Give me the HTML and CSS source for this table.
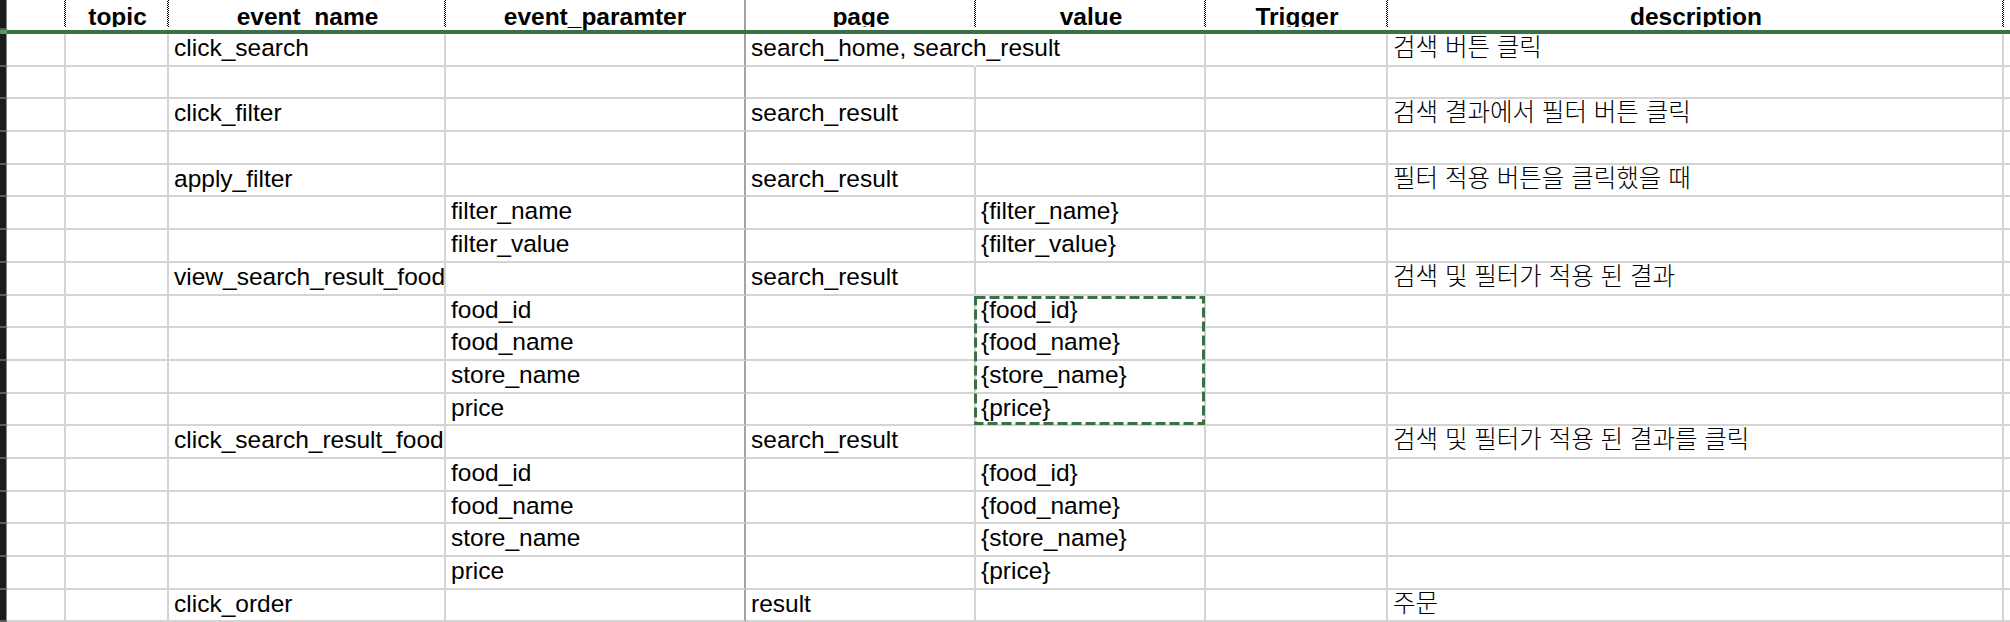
FILE: index.html
```html
<!DOCTYPE html>
<html lang="ko">
<head>
<meta charset="utf-8">
<title>event sheet</title>
<link rel="stylesheet" href="styles.css">
</head>
<body>
<div class="sheet">
  <!-- header -->
  <div class="g"></div>
  <div class="h"></div>
  <div class="h">topic</div>
  <div class="h">event_name</div>
  <div class="h k">event_paramter</div>
  <div class="h">page</div>
  <div class="h">value</div>
  <div class="h">Trigger</div>
  <div class="h">description</div>
  <div class="h last"></div>

  <div class="fg"></div>
  <div class="fz"></div>

  <!-- 1 -->
  <div class="g"></div><div class="d"></div><div class="d"></div>
  <div class="d">click_search</div><div class="d k"></div>
  <div class="d spill">search_home, search_result</div><div class="d"></div><div class="d"></div>
  <div class="d ko">검색 버튼 클릭</div><div class="d last"></div>
  <!-- 2 -->
  <div class="g"></div><div class="d"></div><div class="d"></div>
  <div class="d"></div><div class="d k"></div>
  <div class="d"></div><div class="d"></div><div class="d"></div>
  <div class="d ko"></div><div class="d last"></div>
  <!-- 3 -->
  <div class="g"></div><div class="d"></div><div class="d"></div>
  <div class="d">click_filter</div><div class="d k"></div>
  <div class="d">search_result</div><div class="d"></div><div class="d"></div>
  <div class="d ko">검색 결과에서 필터 버튼 클릭</div><div class="d last"></div>
  <!-- 4 -->
  <div class="g"></div><div class="d"></div><div class="d"></div>
  <div class="d"></div><div class="d k"></div>
  <div class="d"></div><div class="d"></div><div class="d"></div>
  <div class="d ko"></div><div class="d last"></div>
  <!-- 5 -->
  <div class="g"></div><div class="d"></div><div class="d"></div>
  <div class="d">apply_filter</div><div class="d k"></div>
  <div class="d">search_result</div><div class="d"></div><div class="d"></div>
  <div class="d ko">필터 적용 버튼을 클릭했을 때</div><div class="d last"></div>
  <!-- 6 -->
  <div class="g"></div><div class="d"></div><div class="d"></div>
  <div class="d"></div><div class="d k">filter_name</div>
  <div class="d"></div><div class="d">{filter_name}</div><div class="d"></div>
  <div class="d ko"></div><div class="d last"></div>
  <!-- 7 -->
  <div class="g"></div><div class="d"></div><div class="d"></div>
  <div class="d"></div><div class="d k">filter_value</div>
  <div class="d"></div><div class="d">{filter_value}</div><div class="d"></div>
  <div class="d ko"></div><div class="d last"></div>
  <!-- 8 -->
  <div class="g"></div><div class="d"></div><div class="d"></div>
  <div class="d">view_search_result_food</div><div class="d k"></div>
  <div class="d">search_result</div><div class="d"></div><div class="d"></div>
  <div class="d ko">검색 및 필터가 적용 된 결과</div><div class="d last"></div>
  <!-- 9 -->
  <div class="g"></div><div class="d"></div><div class="d"></div>
  <div class="d"></div><div class="d k">food_id</div>
  <div class="d"></div><div class="d">{food_id}</div><div class="d"></div>
  <div class="d ko"></div><div class="d last"></div>
  <!-- 10 -->
  <div class="g"></div><div class="d"></div><div class="d"></div>
  <div class="d"></div><div class="d k">food_name</div>
  <div class="d"></div><div class="d">{food_name}</div><div class="d"></div>
  <div class="d ko"></div><div class="d last"></div>
  <!-- 11 -->
  <div class="g"></div><div class="d"></div><div class="d"></div>
  <div class="d"></div><div class="d k">store_name</div>
  <div class="d"></div><div class="d">{store_name}</div><div class="d"></div>
  <div class="d ko"></div><div class="d last"></div>
  <!-- 12 -->
  <div class="g"></div><div class="d"></div><div class="d"></div>
  <div class="d"></div><div class="d k">price</div>
  <div class="d"></div><div class="d">{price}</div><div class="d"></div>
  <div class="d ko"></div><div class="d last"></div>
  <!-- 13 -->
  <div class="g"></div><div class="d"></div><div class="d"></div>
  <div class="d">click_search_result_food</div><div class="d k"></div>
  <div class="d">search_result</div><div class="d"></div><div class="d"></div>
  <div class="d ko">검색 및 필터가 적용 된 결과를 클릭</div><div class="d last"></div>
  <!-- 14 -->
  <div class="g"></div><div class="d"></div><div class="d"></div>
  <div class="d"></div><div class="d k">food_id</div>
  <div class="d"></div><div class="d">{food_id}</div><div class="d"></div>
  <div class="d ko"></div><div class="d last"></div>
  <!-- 15 -->
  <div class="g"></div><div class="d"></div><div class="d"></div>
  <div class="d"></div><div class="d k">food_name</div>
  <div class="d"></div><div class="d">{food_name}</div><div class="d"></div>
  <div class="d ko"></div><div class="d last"></div>
  <!-- 16 -->
  <div class="g"></div><div class="d"></div><div class="d"></div>
  <div class="d"></div><div class="d k">store_name</div>
  <div class="d"></div><div class="d">{store_name}</div><div class="d"></div>
  <div class="d ko"></div><div class="d last"></div>
  <!-- 17 -->
  <div class="g"></div><div class="d"></div><div class="d"></div>
  <div class="d"></div><div class="d k">price</div>
  <div class="d"></div><div class="d">{price}</div><div class="d"></div>
  <div class="d ko"></div><div class="d last"></div>
  <!-- 18 -->
  <div class="g"></div><div class="d"></div><div class="d"></div>
  <div class="d">click_order</div><div class="d k"></div>
  <div class="d">result</div><div class="d"></div><div class="d"></div>
  <div class="d ko">주문</div><div class="d last"></div>

  <svg class="sel" width="231" height="129" viewBox="0 0 231 129" aria-hidden="true">
    <rect x="1.5" y="1.5" width="228" height="126" fill="none" stroke="#3b7046" stroke-width="3" stroke-dasharray="10 4"/>
  </svg>
</div>
</body>
</html>
```

FILE: styles.css
```css
* { box-sizing: border-box; }

html, body {
  margin: 0;
  background: #ffffff;
}

body {
  font-family: "Liberation Sans", Arial, "Noto Sans CJK KR", sans-serif;
  color: #000000;
}

.sheet {
  position: relative;
  display: grid;
  grid-template-columns: 7px 59px 103px 277px 300px 230px 230px 182px 616px 1fr;
  grid-template-rows: 30px 4px repeat(18, 32.7px);
  width: 2010px;
  height: 622px;
  overflow: hidden;
}

/* row-number gutter */
.g {
  background: #1b1b1b;
  border-right: 1px solid #8c8c8c;
  border-bottom: 2px solid #5c5c5c;
}

/* header cells */
.h {
  height: 27px;
  overflow: hidden;
  padding-top: 3px;
  font-size: 24.5px;
  line-height: 27px;
  font-weight: 700;
  text-align: center;
  white-space: nowrap;
  background: repeating-conic-gradient(#000 0 25%, #fff 0 50%) right top / 2px 2px repeat-y;
}
.h.k {
  background: none;
  border-right: 2px solid #a3a3a3;
  height: 30px;
}
.h.last { background: none; }

/* frozen pane line */
.fg { background: #4f9d5e; }
.fz { grid-column: 2 / -1; background: #3b6f47; }

/* data cells */
.d {
  padding-left: 5px;
  font-size: 24.5px;
  line-height: 27px;
  white-space: nowrap;
  border-right: 2px solid #d4d4d4;
  border-bottom: 2px solid #d4d4d4;
}
.d.k { border-right-color: #a3a3a3; }
.d.last { border-right: none; }
.d.spill { border-right-color: transparent; }
.d.ko {
  font-family: "Liberation Sans", "Noto Sans CJK KR", sans-serif;
  font-weight: 300;
}

/* copy selection marquee */
.sel {
  position: absolute;
  left: 974px;
  top: 296px;
}
```
